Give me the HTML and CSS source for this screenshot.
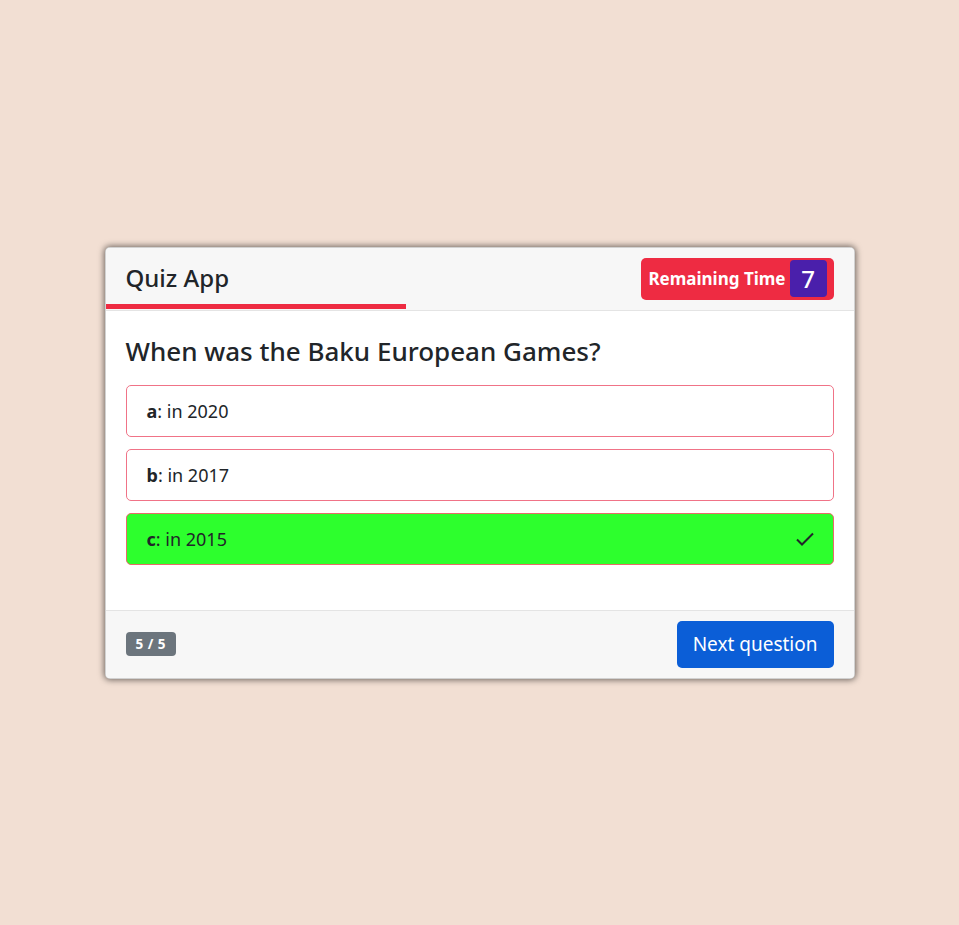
FILE: index.html
```html
<!DOCTYPE html>
<html lang="en">
<head>
<meta charset="utf-8">
<title>Quiz App</title>
<link rel="stylesheet" href="styles.css">
</head>
<body>
<main class="page">
  <section class="card">
    <header class="card-header">
      <h1 class="title">Quiz App</h1>
      <div class="timer">
        <span class="timer-label">Remaining Time</span>
        <span class="timer-value">7</span>
      </div>
      <div class="progress-line" style="width: 40.2%"></div>
    </header>
    <div class="card-body">
      <h2 class="question">When was the Baku European Games?</h2>
      <ul class="options">
        <li class="option"><span><b>a</b>: in 2020</span></li>
        <li class="option"><span><b>b</b>: in 2017</span></li>
        <li class="option correct"><span><b>c</b>: in 2015</span>
          <svg class="check" width="20" height="16" viewBox="0 0 20 16"><path d="M2 8.5 L7 13.5 L18 2.5" fill="none" stroke="#212529" stroke-width="2"/></svg>
        </li>
      </ul>
    </div>
    <footer class="card-footer">
      <span class="count">5 / 5</span>
      <button class="next">Next question</button>
    </footer>
  </section>
</main>
</body>
</html>
```
FILE: styles.css
```css
* { box-sizing: border-box; }
html, body { margin: 0; padding: 0; }
body {
  background: #f2dfd3;
  font-family: "Noto Sans", "Open Sans", sans-serif;
  color: #212529;
}
.page {
  height: 925px;
  display: flex;
  align-items: center;
  justify-content: center;
}
.card {
  width: 750px;
  background: #fff;
  border: 1px solid rgba(0,0,0,0.18);
  border-radius: 5px;
  box-shadow: 0 0 6px 1px rgba(0,0,0,0.55);
  overflow: hidden;
}
.card-header {
  position: relative;
  display: flex;
  justify-content: space-between;
  align-items: center;
  height: 63px;
  padding: 10px 20px 10px 20px;
  background: #f7f7f7;
  border-bottom: 1px solid #e4e4e4;
}
.title {
  margin: 0;
  font-size: 24px;
  font-weight: 500;
  line-height: 1.2;
}
.timer {
  display: flex;
  align-items: center;
  height: 42px;
  padding: 3px 7px 3px 7px;
  background: #ee2b42;
  border-radius: 5px;
  color: #fff;
}
.timer-label {
  font-size: 17px;
  font-weight: 700;
  margin-right: 4px;
}
.timer-value {
  width: 37px;
  height: 37px;
  display: flex;
  align-items: center;
  justify-content: center;
  background: #4a1fab;
  border-radius: 4px;
  font-size: 24px;
  font-weight: 500;
}
.progress-line {
  position: absolute;
  left: 0;
  bottom: 1px;
  height: 5px;
  background: #ee2b42;
}
.card-body {
  padding: 20px 20px 33px;
}
.question {
  margin: 3px 0 16px;
  font-size: 26px;
  font-weight: 500;
  line-height: 35px;
}
.options {
  list-style: none;
  margin: 0;
  padding: 0;
}
.option {
  display: flex;
  align-items: center;
  justify-content: space-between;
  height: 52px;
  margin-bottom: 12px;
  padding: 0 18px 0 20px;
  border: 1px solid #f07387;
  border-radius: 5px;
  font-size: 18px;
}
.option b { font-weight: 700; }
.option.correct {
  background: #2dff2d;
  border-color: #e86a6a;
}
.card-footer {
  display: flex;
  justify-content: space-between;
  align-items: center;
  padding: 10px 20px;
  background: #f7f7f7;
  border-top: 1px solid #e4e4e4;
}
.count {
  display: inline-block;
  padding: 4px 10px;
  background: #6c757d;
  border-radius: 4px;
  color: #fff;
  font-size: 13.5px;
  font-weight: 700;
  letter-spacing: 0.5px;
  line-height: 16px;
}
.next {
  height: 47px;
  padding: 0 16px;
  background: #0b5ed7;
  border: none;
  border-radius: 5px;
  color: #fff;
  font-family: inherit;
  font-size: 19px;
}
```
